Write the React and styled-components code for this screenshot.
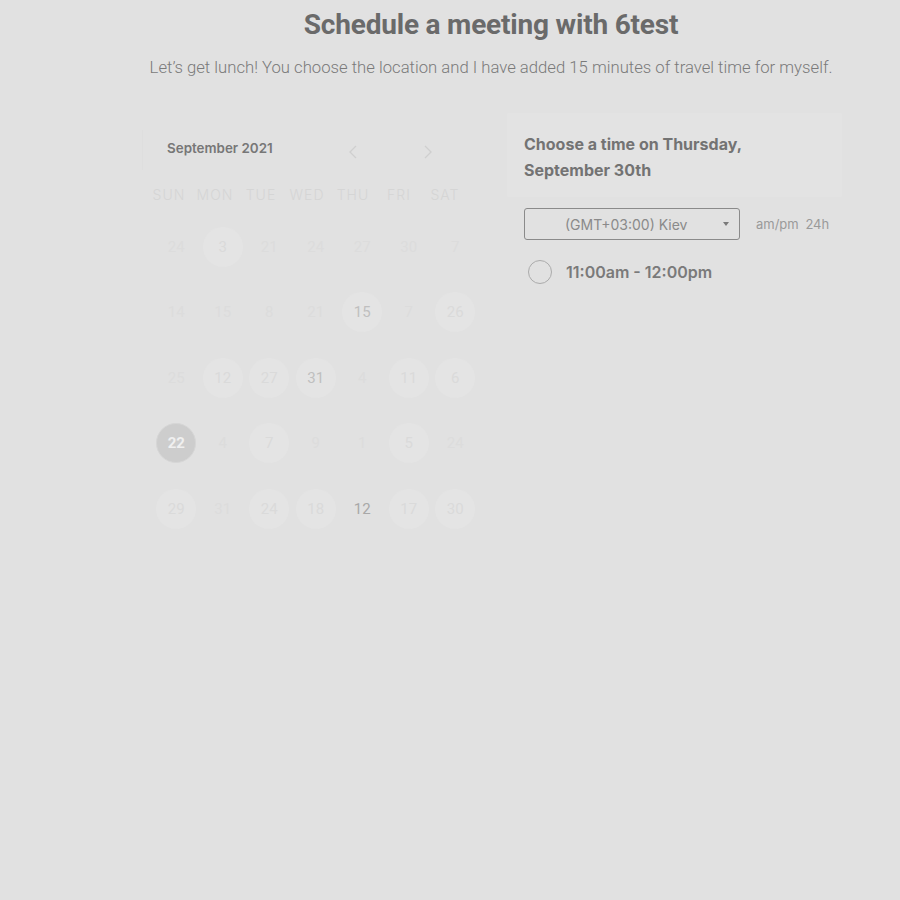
import React from "react";
import styled, { createGlobalStyle } from "styled-components";

const Global = createGlobalStyle`
  html, body { margin: 0; padding: 0; background: #e1e1e1; }
  body { font-family: Inter, "Noto Sans", sans-serif; }
`;

const Page = styled.div`
  width: 900px;
  height: 900px;
  box-sizing: border-box;
  padding: 0 58px 0 140px;
  background: #e1e1e1;
`;

const Title = styled.h1`
  margin: 0;
  padding-top: 8px;
  font-family: Roboto, sans-serif;
  font-weight: 700;
  font-size: 28px;
  line-height: 34px;
  color: #6a6a6a;
  text-align: center;
  letter-spacing: -0.2px;
`;

const Subtitle = styled.p`
  margin: 16px 0 0;
  font-family: Roboto, sans-serif;
  font-weight: 300;
  font-size: 16.7px;
  line-height: 20px;
  color: #7a7a7a;
  text-align: center;
`;

const Columns = styled.div`
  display: flex;
  margin-top: 41px;
`;

const Calendar = styled.div`
  width: 350px;
  flex-shrink: 0;
`;

const CalHeader = styled.div`
  display: flex;
  align-items: center;
  height: 40px;
  margin-top: 11px;
  padding-left: 24px;
  margin-left: 2px;
  border-left: 1px solid #dedede;
`;

const Month = styled.div`
  font-size: 13.4px;
  font-weight: 600;
  color: #777;
  width: 173px;
  margin-top: -4px;
`;

const Arrow = styled.div`
  width: 26px;
  display: flex;
  justify-content: center;
  margin-right: ${(p) => p.$gap || 0}px;
  margin-top: 4px;
`;

const Weekdays = styled.div`
  display: grid;
  grid-template-columns: repeat(7, 46px);
  margin-left: 6px;
  margin-top: 14px;
  height: 20px;
  align-items: center;
`;

const Weekday = styled.div`
  text-align: center;
  font-size: 14px;
  font-weight: 300;
  letter-spacing: 1px;
  color: #d5d5d5;
`;

const Days = styled.div`
  display: grid;
  grid-template-columns: repeat(7, 46.5px);
  grid-auto-rows: 65.5px;
  margin-left: 13px;
  margin-top: 10px;
`;

const Cell = styled.div`
  display: flex;
  align-items: center;
  justify-content: center;
`;

const Day = styled.div`
  width: 40px;
  height: 40px;
  border-radius: 50%;
  display: flex;
  align-items: center;
  justify-content: center;
  font-family: Roboto, sans-serif;
  font-size: 15px;
  font-weight: ${(p) => (p.$kind === "sel" ? 700 : 400)};
  background: ${(p) =>
    p.$kind === "sel"
      ? "#cdcdcd"
      : p.$kind === "hot" || p.$kind === "circ"
      ? "#e4e4e4"
      : "transparent"};
  border: ${(p) => (p.$kind === "sel" ? "1px solid #d6d6d6" : "none")};
  color: ${(p) =>
    p.$kind === "sel"
      ? "#f0f0f0"
      : p.$kind === "hot"
      ? "#bfbfbf"
      : p.$kind === "dark"
      ? "#a8a8a8"
      : p.$kind === "circ"
      ? "#dadada"
      : "#dcdcdc"};
  box-sizing: border-box;
`;

const Panel = styled.div`
  flex: 1;
  margin-left: 17px;
`;

const PanelHead = styled.div`
  background: #e3e3e3;
  padding: 18px 17px 14px;
  margin-top: -6px;
  border-radius: 2px;
`;

const PanelTitle = styled.h2`
  margin: 0;
  font-size: 16px;
  font-weight: 700;
  line-height: 26px;
  color: #737373;
`;

const TzRow = styled.div`
  display: flex;
  align-items: center;
  margin: 11px 0 0 17px;
`;

const Select = styled.div`
  width: 216px;
  height: 32px;
  box-sizing: border-box;
  border: 1px solid #8a8a8a;
  border-radius: 3px;
  display: flex;
  align-items: center;
  padding: 0 10px 0 40px;
  font-size: 14px;
  color: #8a8a8a;
`;

const SelectText = styled.span`
  flex: 1;
`;

const Caret = styled.span`
  width: 0;
  height: 0;
  border-left: 3.5px solid transparent;
  border-right: 3.5px solid transparent;
  border-top: 4px solid #7a7a7a;
`;

const Format = styled.div`
  margin-left: 16px;
  font-size: 13px;
  color: #9a9a9a;
  word-spacing: 3px;
`;

const Slot = styled.label`
  display: flex;
  align-items: center;
  margin: 20px 0 0 21px;
  font-size: 16px;
  font-weight: 600;
  color: #7a7a7a;
`;

const Radio = styled.span`
  width: 24px;
  height: 24px;
  box-sizing: border-box;
  border: 1.5px solid #ababab;
  border-radius: 50%;
  margin-right: 14px;
`;

const weekdays = ["SUN", "MON", "TUE", "WED", "THU", "FRI", "SAT"];

const rows = [
  [["24"], ["3", "circ"], ["21"], ["24"], ["27"], ["30"], ["7"]],
  [["14"], ["15"], ["8"], ["21"], ["15", "hot"], ["7"], ["26", "circ"]],
  [["25"], ["12", "circ"], ["27", "circ"], ["31", "hot"], ["4"], ["11", "circ"], ["6", "circ"]],
  [["22", "sel"], ["4"], ["7", "circ"], ["9"], ["1"], ["5", "circ"], ["24"]],
  [["29", "circ"], ["31"], ["24", "circ"], ["18", "circ"], ["12", "dark"], ["17", "circ"], ["30", "circ"]],
];

const Chevron = ({ dir }) => (
  <svg width="8" height="14" viewBox="0 0 8 14" fill="none">
    <path
      d={dir === "left" ? "M7 1L1 7l6 6" : "M1 1l6 6-6 6"}
      stroke="#cfcfcf"
      strokeWidth="1.3"
    />
  </svg>
);

export default function App() {
  return (
    <Page>
      <Global />
      <Title>Schedule a meeting with 6test</Title>
      <Subtitle>
        Let’s get lunch! You choose the location and I have added 15 minutes of travel time for myself.
      </Subtitle>
      <Columns>
        <Calendar>
          <CalHeader>
            <Month>September 2021</Month>
            <Arrow $gap={49}>
              <Chevron dir="left" />
            </Arrow>
            <Arrow>
              <Chevron dir="right" />
            </Arrow>
          </CalHeader>
          <Weekdays>
            {weekdays.map((w) => (
              <Weekday key={w}>{w}</Weekday>
            ))}
          </Weekdays>
          <Days>
            {rows.flat().map(([n, kind], i) => (
              <Cell key={i}>
                <Day $kind={kind}>{n}</Day>
              </Cell>
            ))}
          </Days>
        </Calendar>
        <Panel>
          <PanelHead>
            <PanelTitle>
              Choose a time on Thursday,
              <br />
              September 30th
            </PanelTitle>
          </PanelHead>
          <TzRow>
            <Select>
              <SelectText>(GMT+03:00) Kiev</SelectText>
              <Caret />
            </Select>
            <Format>am/pm 24h</Format>
          </TzRow>
          <Slot>
            <Radio />
            11:00am - 12:00pm
          </Slot>
        </Panel>
      </Columns>
    </Page>
  );
}
